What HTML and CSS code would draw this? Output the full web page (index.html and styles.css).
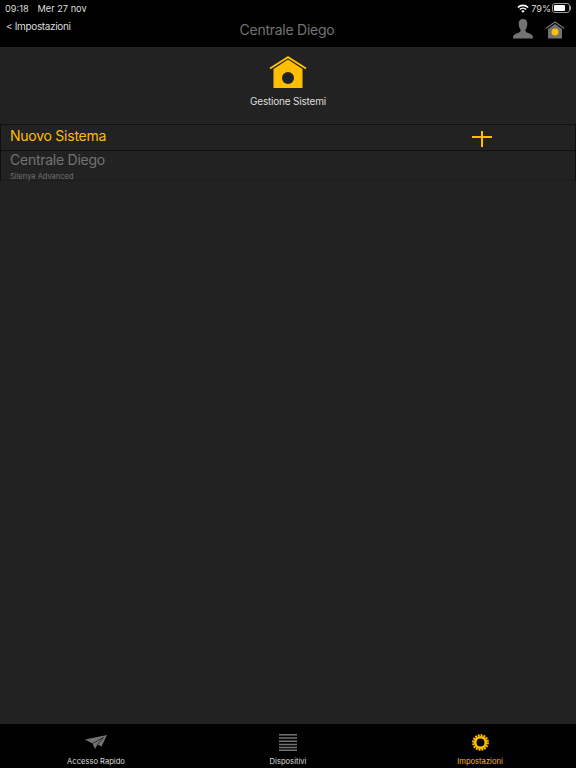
FILE: index.html
```html
<!DOCTYPE html>
<html lang="it">
<head>
    <meta charset="UTF-8">
    <meta name="viewport" content="width=device-width, initial-scale=1.0">
    <title>Gestione Sistemi</title>
    <link rel="stylesheet" href="styles.css">
</head>
<body>
    <div class="app">
        <div class="top-bar">
            <div class="status-bar">
                <div class="status-left">
                    <span>09:18</span>
                    <span>Mer 27 nov</span>
                </div>
                <div class="status-right">
                    <svg class="wifi" width="12" height="9" viewBox="0 0 12 9">
                        <path d="M0.3 3 A8 8 0 0 1 11.7 3 L10.6 4.1 A6.5 6.5 0 0 0 1.4 4.1 Z" fill="#fff"/>
                        <path d="M2.3 5 A5.2 5.2 0 0 1 9.7 5 L8.6 6.1 A3.7 3.7 0 0 0 3.4 6.1 Z" fill="#fff"/>
                        <path d="M4.2 7 A2.6 2.6 0 0 1 7.8 7 L6 8.8 Z" fill="#fff"/>
                    </svg>
                    <span>79%</span>
                    <div class="battery"><div class="battery-level"></div></div>
                    <div class="battery-tip"></div>
                </div>
            </div>
            <div class="nav-bar">
                <div class="nav-back">&lt; Impostazioni</div>
                <div class="nav-title">Centrale Diego</div>
                <div class="nav-icons">
                    <svg width="22" height="21" viewBox="0 0 22 21">
                        <path d="M11 1 C14.500 1 15.500 3.500 15.300 6.500 C15.100 9 14 11 13.300 12 C13.300 14 15 14.500 17.500 15.500 C20 16.500 21 17.500 21 19.500 L21 20.500 L1 20.500 L1 19.500 C1 17.500 2 16.500 4.500 15.500 C7 14.500 8.700 14 8.700 12 C8 11 6.900 9 6.700 6.500 C6.500 3.500 7.500 1 11 1 Z" fill="#737373"/>
                    </svg>
                    <svg width="20" height="18" viewBox="0 0 20 18">
                        <path d="M3 8 L10 3 L17 8 L17 17.500 L3 17.500 Z" fill="#737373"/>
                        <path d="M0.700 7.500 L10 1 L19.300 7.500" fill="none" stroke="#737373" stroke-width="1.300"/>
                        <circle cx="10" cy="11" r="3.500" fill="#ffbf00"/>
                    </svg>
                </div>
            </div>
        </div>

        <div class="content">
            <div class="section-head">
                <svg width="38" height="32" viewBox="0 0 38 32">
                    <path d="M4.500 13 L19 3.500 L33.500 13 L33.500 32 L4.500 32 Z" fill="#ffbf00"/>
                    <path d="M1 12.500 L19 1.200 L37 12.500" fill="none" stroke="#ffbf00" stroke-width="2"/>
                    <circle cx="19" cy="22" r="6" fill="#222"/>
                </svg>
                <div class="section-label">Gestione Sistemi</div>
            </div>

            <div class="system-list">
                <div class="system-row new-row">
                    <div class="row-name">Nuovo Sistema</div>
                    <div class="plus"></div>
                </div>
                <div class="system-row">
                    <div class="row-name">Centrale Diego</div>
                    <div class="row-sub">Silenya Advanced</div>
                </div>
            </div>
        </div>

        <div class="tab-bar">
            <div class="tab">
                <svg width="22" height="17" viewBox="0 0 22 17">
                    <path d="M0 5.500 L22 1 L16.500 12.500 L12.500 10.500 L10 15 L7.500 9.500 Z" fill="#737373"/>
                    <path d="M7.500 9.500 L18.500 3.500 L12.500 10.500" fill="none" stroke="#000" stroke-width="0.600"/>
                </svg>
                <div class="tab-label">Accesso Rapido</div>
            </div>
            <div class="tab">
                <svg width="18" height="17" viewBox="0 0 18 17">
                    <path d="M0 0.750 H18 M0 4 H18 M0 7.250 H18 M0 10.500 H18 M0 13.500 H18 M0 16.250 H18" stroke="#737373" stroke-width="1.500"/>
                </svg>
                <div class="tab-label">Dispositivi</div>
            </div>
            <div class="tab active">
                <svg width="17" height="17" viewBox="0 0 17 17">
                    <circle cx="8.500" cy="8.500" r="5.300" fill="none" stroke="#ffbf00" stroke-width="2.600"/>
                    <circle cx="8.500" cy="8.500" r="7.400" fill="none" stroke="#ffbf00" stroke-width="2" stroke-dasharray="1.900 1"/>
                </svg>
                <div class="tab-label">Impostazioni</div>
            </div>
        </div>
    </div>
</body>
</html>
```

FILE: styles.css
```css
html, body {
    margin: 0;
    padding: 0;
}

body {
    font-family: Inter, Roboto, sans-serif;
    background: #222;
    color: #fff;
}

.app {
    width: 576px;
    height: 768px;
    display: flex;
    flex-direction: column;
    overflow: hidden;
}

.top-bar {
    height: 47px;
    background: #000;
    flex-shrink: 0;
}

.status-bar {
    height: 16px;
    padding: 0 5px 0 5px;
    display: flex;
    justify-content: space-between;
    align-items: center;
    font-size: 9.200px;
    color: #ddd;
}

.status-left {
    display: flex;
    gap: 9px;
}

.status-right {
    display: flex;
    align-items: center;
}

.wifi {
    margin-right: 2px;
}

.battery {
    width: 14px;
    height: 6px;
    margin-left: 1px;
    border: 1px solid #999;
    border-radius: 3px;
    padding: 1px;
}

.battery-level {
    width: 79%;
    height: 100%;
    background: #fff;
    border-radius: 1px;
}

.battery-tip {
    width: 1px;
    height: 4px;
    background: #999;
}

.nav-bar {
    height: 31px;
    display: flex;
    justify-content: space-between;
    position: relative;
}

.nav-back {
    padding: 4px 0 0 6px;
    font-size: 10px;
    letter-spacing: -0.350px;
    color: #ddd;
}

.nav-title {
    position: absolute;
    left: 0;
    right: 2px;
    top: 5px;
    text-align: center;
    font-size: 14px;
    letter-spacing: -0.250px;
    color: #737373;
}

.nav-icons {
    display: flex;
    align-items: flex-end;
    gap: 11px;
    padding: 0 11px 8px 0;
}

.content {
    flex: 1;
    display: flex;
    flex-direction: column;
}

.section-head {
    height: 77px;
    padding-top: 9px;
    box-sizing: border-box;
    display: flex;
    flex-direction: column;
    align-items: center;
}

.section-label {
    margin-top: 7px;
    font-size: 10px;
    letter-spacing: -0.200px;
    color: #ddd;
}

.system-list {
    border-top: 1px solid #0f0f0f;
    border-left: 1px solid #0f0f0f;
    border-right: 1px solid #0f0f0f;
    border-bottom: 1px solid #1c1c1c;
}

.system-row {
    padding-left: 9px;
    height: 29px;
    position: relative;
}

.new-row {
    height: 25px;
    border-bottom: 1px solid #0f0f0f;
}

.row-name {
    font-size: 14px;
    letter-spacing: -0.250px;
    line-height: 18px;
    color: #737373;
}

.new-row .row-name {
    color: #ffbf00;
    padding-top: 2px;
}

.row-sub {
    font-size: 7.500px;
    color: #737373;
    margin-top: 3px;
}

/* crossbar sits above the middle, as in the app's icon */
.plus {
    position: absolute;
    left: 471px;
    top: 6px;
    width: 20px;
    height: 16px;
    background:
        linear-gradient(#ffbf00, #ffbf00) center 5px / 20px 2px no-repeat,
        linear-gradient(#ffbf00, #ffbf00) center / 2px 16px no-repeat;
}

.tab-bar {
    height: 44px;
    background: #000;
    flex-shrink: 0;
    display: grid;
    grid-template-columns: repeat(3, 1fr);
}

.tab {
    display: flex;
    flex-direction: column;
    align-items: center;
    padding-top: 10px;
    color: #ddd;
}

.tab.active {
    color: #ffbf00;
}

.tab-label {
    margin-top: 6px;
    font-size: 7.600px;
}
```
